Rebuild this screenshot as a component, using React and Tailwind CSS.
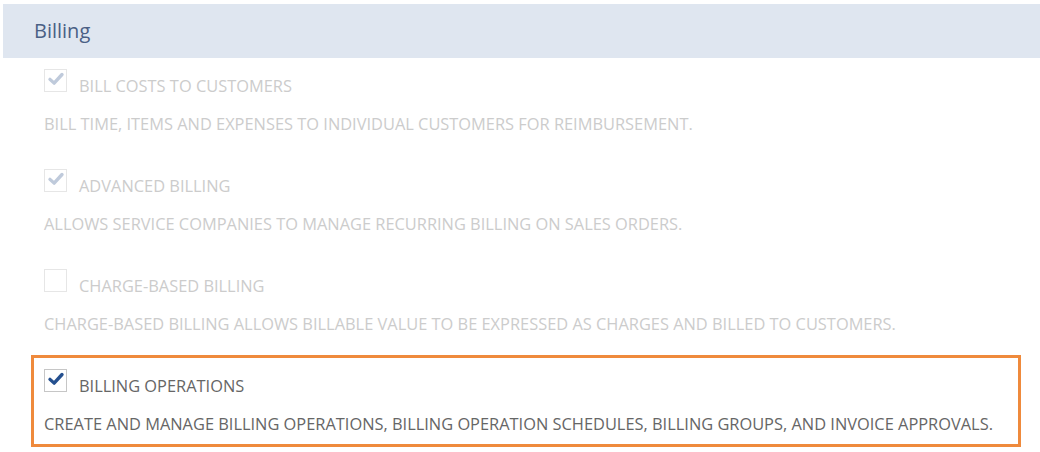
const features = [
  {
    title: "BILL COSTS TO CUSTOMERS",
    desc: "BILL TIME, ITEMS AND EXPENSES TO INDIVIDUAL CUSTOMERS FOR REIMBURSEMENT.",
    checked: true,
    disabled: true,
  },
  {
    title: "ADVANCED BILLING",
    desc: "ALLOWS SERVICE COMPANIES TO MANAGE RECURRING BILLING ON SALES ORDERS.",
    checked: true,
    disabled: true,
  },
  {
    title: "CHARGE-BASED BILLING",
    desc: "CHARGE-BASED BILLING ALLOWS BILLABLE VALUE TO BE EXPRESSED AS CHARGES AND BILLED TO CUSTOMERS.",
    checked: false,
    disabled: true,
  },
  {
    title: "BILLING OPERATIONS",
    desc: "CREATE AND MANAGE BILLING OPERATIONS, BILLING OPERATION SCHEDULES, BILLING GROUPS, AND INVOICE APPROVALS.",
    checked: true,
    disabled: false,
    highlight: true,
  },
];

const CheckBox = ({ checked, disabled }) => (
  <span
    className={
      "flex h-[23px] w-[23px] shrink-0 items-center justify-center border bg-white " +
      (disabled ? "border-[#e6e6e6]" : "border-[#c6c6c6]")
    }
  >
    {checked ? (
      <svg width="18" height="18" viewBox="0 0 24 24" className="-mt-[3px]">
        <path
          d="M4 12.5 L9.5 17.5 L20 6"
          fill="none"
          stroke={disabled ? "#bfcadb" : "#25508f"}
          strokeWidth="4.5"
          strokeLinecap="round"
          strokeLinejoin="round"
        />
      </svg>
    ) : null}
  </span>
);

export default function App() {
  return (
    <div className="min-h-screen bg-white pt-1 font-['Open_Sans',sans-serif]">
      <div className="ml-[3px] flex h-[54px] items-center bg-[#dfe6f0] pl-[31px]">
        <h2 className="text-[20px] text-[#4a6085]">Billing</h2>
      </div>

      <div className="-mt-[3px] flex flex-col gap-2">
        {features.map((f) => (
          <div
            key={f.title}
            className={
              "ml-[31px] w-[990px] border-[3px] px-[10px] pt-[11px] pb-[8px] " +
              (f.highlight ? "border-[#ef8a3c]" : "border-transparent")
            }
          >
            <div className="flex items-start gap-3">
              <CheckBox checked={f.checked} disabled={f.disabled} />
              <span
                className={
                  "mt-[5px] text-[16.4px] leading-6 " +
                  (f.disabled ? "text-[#cccccc]" : "text-[#666666]")
                }
              >
                {f.title}
              </span>
            </div>
            <p
              className={
                "mt-[14px] whitespace-nowrap text-[16.4px] leading-6 " +
                (f.disabled ? "text-[#cccccc]" : "text-[#666666]")
              }
            >
              {f.desc}
            </p>
          </div>
        ))}
      </div>
    </div>
  );
}
